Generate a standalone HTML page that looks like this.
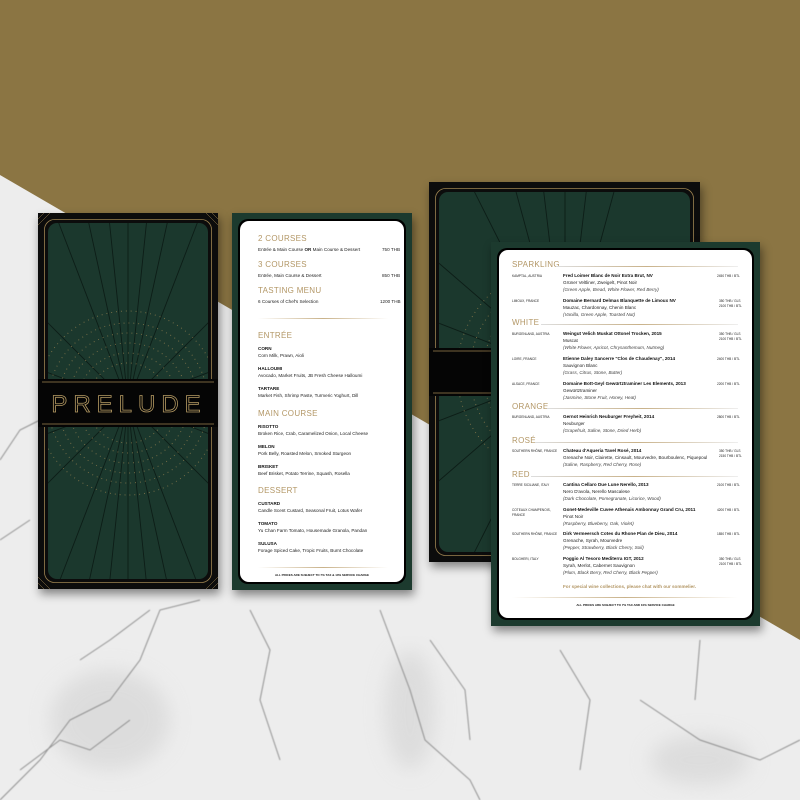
<!DOCTYPE html>
<html><head><meta charset="utf-8"><style>
*{margin:0;padding:0;box-sizing:border-box}
body{width:800px;height:800px;overflow:hidden;position:relative;background:#ececec;font-family:"Liberation Sans",sans-serif}
.abs{position:absolute}
.card{position:absolute;box-shadow:2px 5px 9px rgba(0,0,0,.45)}
.t{position:absolute;white-space:nowrap;color:#222;font-size:4.6px;line-height:5px}
.h{position:absolute;white-space:nowrap;color:#b39766;font-size:8px;letter-spacing:.3px}
.b{font-weight:bold;color:#111}
.i{font-style:italic;color:#444}
.g{color:#b39766}
</style></head><body>
<svg class="abs" style="left:0;top:0" width="800" height="800">
<defs><filter id="bl"><feGaussianBlur stdDeviation=".6"/></filter><filter id="bl2"><feGaussianBlur stdDeviation="10"/></filter></defs>
<rect width="800" height="800" fill="#ededed"/>
<g filter="url(#bl2)" fill="#d2d2d2" opacity=".6">
<ellipse cx="110" cy="720" rx="60" ry="50"/><ellipse cx="410" cy="710" rx="25" ry="60"/><ellipse cx="700" cy="760" rx="50" ry="25"/>
</g>
<g filter="url(#bl)" stroke="#7a7a7a" fill="none" stroke-width="1" opacity=".8">
<path d="M0 800 L40 760 L70 720 L110 700 L140 660 L160 610 L200 600"/>
<path d="M80 660 L110 640 L150 610"/>
<path d="M20 770 L60 740 L90 750 L130 720"/>
<path d="M380 610 L395 650 L410 690 L425 740 L470 780 L480 800"/>
<path d="M430 640 L465 690 L470 740"/>
<path d="M560 650 L590 700 L580 770"/>
<path d="M640 700 L700 740 L760 760 L800 740"/>
<path d="M700 640 L695 700"/>
<path d="M0 460 L20 430 L40 420"/>
<path d="M0 540 L30 520"/>
<path d="M250 610 L270 650 L260 700 L280 760"/>
</g>
<polygon points="0,0 800,0 800,640 0,175" fill="#8b7543"/>
</svg>

<div class="card" style="left:38px;top:213px;width:180px;height:376px">
<svg width="180" height="376">
<defs><clipPath id="c1"><rect x="10" y="10" width="160" height="356" rx="9"/></clipPath></defs>
<rect width="180" height="376" fill="#0c0c0c"/>
<rect x="6.5" y="6.5" width="167" height="363" rx="10" fill="none" stroke="#9c8250" stroke-width=".8"/>
<rect x="10" y="10" width="160" height="356" rx="9" fill="#1b382d"/>
<g clip-path="url(#c1)" stroke="#0d1d17" stroke-width=".9">
<line x1="90" y1="190" x2="90" y2="-200"/><line x1="90" y1="190" x2="90" y2="580"/>
<line x1="90" y1="190" x2="50" y2="-200"/><line x1="90" y1="190" x2="130" y2="-200"/>
<line x1="90" y1="190" x2="5" y2="-200"/><line x1="90" y1="190" x2="175" y2="-200"/>
<line x1="90" y1="190" x2="-60" y2="-200"/><line x1="90" y1="190" x2="240" y2="-200"/>
<line x1="90" y1="190" x2="-200" y2="-100"/><line x1="90" y1="190" x2="380" y2="-100"/>
<line x1="90" y1="190" x2="-200" y2="80"/><line x1="90" y1="190" x2="380" y2="80"/>
<line x1="90" y1="190" x2="50" y2="580"/><line x1="90" y1="190" x2="130" y2="580"/>
<line x1="90" y1="190" x2="5" y2="580"/><line x1="90" y1="190" x2="175" y2="580"/>
<line x1="90" y1="190" x2="-60" y2="580"/><line x1="90" y1="190" x2="240" y2="580"/>
<line x1="90" y1="190" x2="-200" y2="480"/><line x1="90" y1="190" x2="380" y2="480"/>
<line x1="90" y1="190" x2="-200" y2="300"/><line x1="90" y1="190" x2="380" y2="300"/>
</g>
<g clip-path="url(#c1)" fill="none" stroke="#a48a55" stroke-width="1" stroke-dasharray=".9 4" opacity=".7">
<circle cx="90" cy="190" r="40"/><circle cx="90" cy="190" r="50"/><circle cx="90" cy="190" r="60"/><circle cx="90" cy="190" r="70"/><circle cx="90" cy="190" r="80"/><circle cx="90" cy="190" r="92"/>
</g>
<rect x="0" y="166" width="180" height="48" fill="#050505"/>
<line x1="4" y1="169" x2="176" y2="169" stroke="#9c8250" stroke-width=".7"/>
<line x1="4" y1="211" x2="176" y2="211" stroke="#9c8250" stroke-width=".7"/>
<text x="91" y="199" text-anchor="middle" font-family="Liberation Sans" font-size="24" letter-spacing="6" fill="none" stroke="#b59a63" stroke-width=".8">PRELUDE</text>
<g stroke="#9c8250" stroke-width=".5">
<path d="M0 12 L12 0 M0 6 L6 0 M180 12 L168 0 M180 6 L174 0 M0 364 L12 376 M0 370 L6 376 M180 364 L168 376 M180 370 L174 376"/>
</g>
</svg>
</div>

<div class="card" style="left:232px;top:213px;width:180px;height:377px;background:#1c3a2e">
<div class="abs" style="left:6px;top:6px;width:168px;height:365px;background:#000;border-radius:10px"></div>
<div class="abs" style="left:8px;top:8px;width:164px;height:361px;background:#fff;border-radius:9px"></div>
<div class="h" style="left:26px;top:21px">2 COURSES</div>
<div class="t" style="left:26px;top:34px">Entrée &amp; Main Course <b>OR</b> Main Course &amp; Dessert</div><div class="t" style="left:150px;top:34px">750 THB</div>
<div class="h" style="left:26px;top:47px">3 COURSES</div>
<div class="t" style="left:26px;top:60px">Entrée, Main Course &amp; Dessert</div><div class="t" style="left:150px;top:60px">850 THB</div>
<div class="h" style="left:26px;top:73px">TASTING MENU</div>
<div class="t" style="left:26px;top:86px">6 Courses of Chef's Selection</div><div class="t" style="left:148px;top:86px">1200 THB</div>
<div class="abs" style="left:26px;top:105px;width:130px;height:1px;background:linear-gradient(90deg,transparent,#c9b28a,transparent)"></div>
<div class="h" style="left:26px;top:118px">ENTRÉE</div>
<div class="t b" style="left:26px;top:133px">CORN</div><div class="t" style="left:26px;top:140px">Corn Milk, Prawn, Aioli</div>
<div class="t b" style="left:26px;top:153px">HALLOUMI</div><div class="t" style="left:26px;top:160px">Avocado, Market Fruits, JB Fresh Cheese Halloumi</div>
<div class="t b" style="left:26px;top:173px">TARTARE</div><div class="t" style="left:26px;top:180px">Market Fish, Shrimp Paste, Turmeric Yoghurt, Dill</div>
<div class="h" style="left:26px;top:196px">MAIN COURSE</div>
<div class="t b" style="left:26px;top:211px">RISOTTO</div><div class="t" style="left:26px;top:218px">Broken Rice, Crab, Caramelized Onion, Local Cheese</div>
<div class="t b" style="left:26px;top:231px">MELON</div><div class="t" style="left:26px;top:238px">Pork Belly, Roasted Melon, Smoked Sturgeon</div>
<div class="t b" style="left:26px;top:251px">BRISKET</div><div class="t" style="left:26px;top:258px">Beef Brisket, Potato Terrine, Squash, Rosella</div>
<div class="h" style="left:26px;top:273px">DESSERT</div>
<div class="t b" style="left:26px;top:288px">CUSTARD</div><div class="t" style="left:26px;top:295px">Candle Scent Custard, Seasonal Fruit, Lotus Wafer</div>
<div class="t b" style="left:26px;top:308px">TOMATO</div><div class="t" style="left:26px;top:315px">Yu Chan Farm Tomato, Housemade Granola, Pandan</div>
<div class="t b" style="left:26px;top:328px">SULUSA</div><div class="t" style="left:26px;top:335px">Forage Spiced Cake, Tropic Fruits, Burnt Chocolate</div>
<div class="abs" style="left:26px;top:354px;width:130px;height:1px;background:linear-gradient(90deg,transparent,#c9b28a,transparent)"></div>
<div class="t b" style="left:0;width:180px;text-align:center;top:360px;font-size:3px">ALL PRICES ARE SUBJECT TO 7% TAX &amp; 10% SERVICE CHARGE</div>
</div>

<div class="card" style="left:429px;top:182px;width:271px;height:380px">
<svg width="271" height="380">
<defs><clipPath id="c3"><rect x="10" y="10" width="251" height="360" rx="9"/></clipPath></defs>
<rect width="271" height="380" fill="#0c0c0c"/>
<rect x="6.5" y="6.5" width="258" height="367" rx="10" fill="none" stroke="#9c8250" stroke-width=".8"/>
<rect x="10" y="10" width="251" height="360" rx="9" fill="#1b382d"/>
<g clip-path="url(#c3)" stroke="#0d1d17" stroke-width=".9">
<line x1="136" y1="190" x2="136" y2="-200"/><line x1="136" y1="190" x2="90" y2="-200"/><line x1="136" y1="190" x2="30" y2="-200"/><line x1="136" y1="190" x2="-60" y2="-200"/><line x1="136" y1="190" x2="-200" y2="-100"/><line x1="136" y1="190" x2="-200" y2="60"/><line x1="136" y1="190" x2="-200" y2="190"/><line x1="136" y1="190" x2="-200" y2="320"/><line x1="136" y1="190" x2="-200" y2="480"/><line x1="136" y1="190" x2="-60" y2="580"/><line x1="136" y1="190" x2="30" y2="580"/><line x1="136" y1="190" x2="182" y2="-200"/><line x1="136" y1="190" x2="242" y2="-200"/>
</g>
<g clip-path="url(#c3)" fill="none" stroke="#a48a55" stroke-width="1" stroke-dasharray=".9 4" opacity=".7">
<circle cx="136" cy="190" r="70"/><circle cx="136" cy="190" r="82"/><circle cx="136" cy="190" r="95"/><circle cx="136" cy="190" r="108"/>
</g>
<rect x="0" y="166" width="271" height="48" fill="#050505"/>
<line x1="4" y1="169" x2="267" y2="169" stroke="#9c8250" stroke-width=".7"/>
<line x1="4" y1="211" x2="267" y2="211" stroke="#9c8250" stroke-width=".7"/>
</svg>
</div>

<div class="card" style="left:491px;top:242px;width:269px;height:384px;background:#1c3a2e">
<div class="abs" style="left:6px;top:6px;width:257px;height:372px;background:#000;border-radius:10px"></div>
<div class="abs" style="left:8px;top:8px;width:253px;height:368px;background:#fff;border-radius:9px"></div>
<div class="h" style="left:21px;top:18px">SPARKLING</div><div class="abs" style="left:65px;top:24px;width:182px;height:1px;background:linear-gradient(90deg,#ddd,#c9b28a,#eee)"></div>
<div class="t" style="left:21px;top:32px;font-size:3.2px">KAMPTAL, AUSTRIA</div>
<div class="t b" style="left:72px;top:31px">Fred Loimer Blanc de Noir Extra Brut, NV</div><div class="t" style="left:72px;top:38px">Grüner Veltliner, Zweigelt, Pinot Noir</div><div class="t i" style="left:72px;top:45px">(Green Apple, Bread, White Flower, Red Berry)</div>
<div class="t" style="left:226px;top:32px;font-size:3.2px">2450 THB / BTL</div>
<div class="t" style="left:21px;top:57px;font-size:3.2px">LIMOUX, FRANCE</div>
<div class="t b" style="left:72px;top:56px">Domaine Bernard Delmas Blanquette de Limoux NV</div><div class="t" style="left:72px;top:63px">Mauzac, Chardonnay, Chenin Blanc</div><div class="t i" style="left:72px;top:70px">(Vanilla, Green Apple, Toasted Nut)</div>
<div class="t" style="left:228px;top:57px;font-size:3.2px">350 THB / GLS<br>2100 THB / BTL</div>
<div class="h" style="left:21px;top:76px">WHITE</div><div class="abs" style="left:50px;top:82px;width:197px;height:1px;background:linear-gradient(90deg,#ddd,#c9b28a,#eee)"></div>
<div class="t" style="left:21px;top:90px;font-size:3.2px">BURGENLAND, AUSTRIA</div>
<div class="t b" style="left:72px;top:89px">Weingut Velich Muskat Ottonel Trocken, 2015</div><div class="t" style="left:72px;top:96px">Muscat</div><div class="t i" style="left:72px;top:103px">(White Flower, Apricot, Chrysanthemum, Nutmeg)</div>
<div class="t" style="left:228px;top:90px;font-size:3.2px">350 THB / GLS<br>2100 THB / BTL</div>
<div class="t" style="left:21px;top:115px;font-size:3.2px">LOIRE, FRANCE</div>
<div class="t b" style="left:72px;top:114px">Etienne Daley Sancerre "Clos de Chaudenay", 2014</div><div class="t" style="left:72px;top:121px">Sauvignon Blanc</div><div class="t i" style="left:72px;top:128px">(Grass, Citrus, Stone, Butter)</div>
<div class="t" style="left:226px;top:115px;font-size:3.2px">2400 THB / BTL</div>
<div class="t" style="left:21px;top:140px;font-size:3.2px">ALSACE, FRANCE</div>
<div class="t b" style="left:72px;top:139px">Domaine Bott-Geyl Gewürtztraminer Les Elements, 2013</div><div class="t" style="left:72px;top:146px">Gewürtztraminer</div><div class="t i" style="left:72px;top:153px">(Jasmine, Stone Fruit, Honey, Heat)</div>
<div class="t" style="left:226px;top:140px;font-size:3.2px">2200 THB / BTL</div>
<div class="h" style="left:21px;top:160px">ORANGE</div><div class="abs" style="left:56px;top:166px;width:191px;height:1px;background:linear-gradient(90deg,#ddd,#c9b28a,#eee)"></div>
<div class="t" style="left:21px;top:173px;font-size:3.2px">BURGENLAND, AUSTRIA</div>
<div class="t b" style="left:72px;top:172px">Gernot Heinrich Neuburger Freyheit, 2014</div><div class="t" style="left:72px;top:179px">Neuburger</div><div class="t i" style="left:72px;top:186px">(Grapefruit, Saline, Stone, Dried Herb)</div>
<div class="t" style="left:226px;top:173px;font-size:3.2px">2800 THB / BTL</div>
<div class="h" style="left:21px;top:194px">ROSÉ</div><div class="abs" style="left:44px;top:200px;width:203px;height:1px;background:linear-gradient(90deg,#ddd,#c9b28a,#eee)"></div>
<div class="t" style="left:21px;top:207px;font-size:3.2px">SOUTHERN RHÔNE, FRANCE</div>
<div class="t b" style="left:72px;top:206px">Chateau d'Aqueria Tavel Rosé, 2014</div><div class="t" style="left:72px;top:213px">Grenache Noir, Clairette, Cinsault, Mourvedre, Bourboulenc, Piquepoul</div><div class="t i" style="left:72px;top:220px">(Saline, Raspberry, Red Cherry, Rose)</div>
<div class="t" style="left:228px;top:207px;font-size:3.2px">350 THB / GLS<br>2150 THB / BTL</div>
<div class="h" style="left:21px;top:228px">RED</div><div class="abs" style="left:40px;top:234px;width:207px;height:1px;background:linear-gradient(90deg,#ddd,#c9b28a,#eee)"></div>
<div class="t" style="left:21px;top:241px;font-size:3.2px">TERRE SICILIANE, ITALY</div>
<div class="t b" style="left:72px;top:240px">Cantina Cellaro Due Lune Nerello, 2013</div><div class="t" style="left:72px;top:247px">Nero D'avola, Nerello Mascalese</div><div class="t i" style="left:72px;top:254px">(Dark Chocolate, Pomegranate, Licorice, Wood)</div>
<div class="t" style="left:226px;top:241px;font-size:3.2px">2100 THB / BTL</div>
<div class="t" style="left:21px;top:266px;font-size:3.2px">COTEAUX CHAMPENOIS,<br>FRANCE</div>
<div class="t b" style="left:72px;top:265px">Gonet-Medeville Cuvee Athenais Ambonnay Grand Cru, 2011</div><div class="t" style="left:72px;top:272px">Pinot Noir</div><div class="t i" style="left:72px;top:279px">(Raspberry, Blueberry, Oak, Violet)</div>
<div class="t" style="left:226px;top:266px;font-size:3.2px">4200 THB / BTL</div>
<div class="t" style="left:21px;top:290px;font-size:3.2px">SOUTHERN RHÔNE, FRANCE</div>
<div class="t b" style="left:72px;top:289px">Dirk Vermeersch Cotes du Rhone Plan de Dieu, 2014</div><div class="t" style="left:72px;top:296px">Grenache, Syrah, Mourvedre</div><div class="t i" style="left:72px;top:303px">(Pepper, Strawberry, Black Cherry, Soil)</div>
<div class="t" style="left:226px;top:290px;font-size:3.2px">1850 THB / BTL</div>
<div class="t" style="left:21px;top:315px;font-size:3.2px">BOLGHERI, ITALY</div>
<div class="t b" style="left:72px;top:314px">Poggio Al Tesoro Mediterra IGT, 2012</div><div class="t" style="left:72px;top:321px">Syrah, Merlot, Cabernet Sauvignon</div><div class="t i" style="left:72px;top:328px">(Plum, Black Berry, Red Cherry, Black Pepper)</div>
<div class="t" style="left:228px;top:315px;font-size:3.2px">350 THB / GLS<br>2100 THB / BTL</div>
<div class="t g" style="left:72px;top:342px;font-weight:bold">For special wine collections, please chat with our sommelier.</div>
<div class="abs" style="left:21px;top:355px;width:226px;height:1px;background:linear-gradient(90deg,transparent,#c9b28a,transparent)"></div>
<div class="t b" style="left:0;width:269px;text-align:center;top:361px;font-size:3px">ALL PRICES ARE SUBJECT TO 7% TAX AND 10% SERVICE CHARGE</div>
</div>
</body></html>
